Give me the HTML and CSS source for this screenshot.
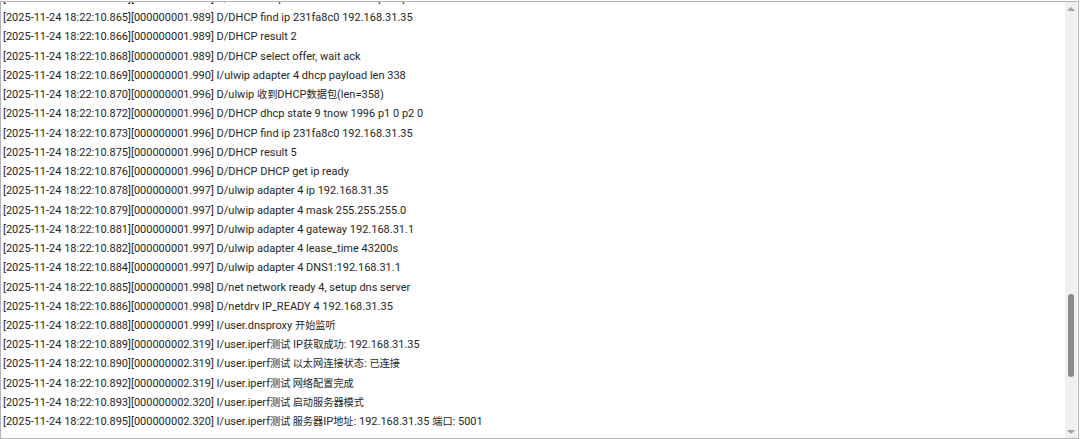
FILE: index.html
```html
<!DOCTYPE html>
<html lang="zh-CN">
<head>
<meta charset="utf-8">
<title>Log</title>
<link rel="stylesheet" href="styles.css">
</head>
<body>
<div class="frame">
  <div class="log">
    <div class="lines">
      <div class="line">[2025-11-24 18:22:10.863][000000001.989] D/DHCP dhcp state 4 tnow 1989 p1 0 p2 0</div>
      <div class="line">[2025-11-24 18:22:10.865][000000001.989] D/DHCP find ip 231fa8c0 192.168.31.35</div>
      <div class="line">[2025-11-24 18:22:10.866][000000001.989] D/DHCP result 2</div>
      <div class="line">[2025-11-24 18:22:10.868][000000001.989] D/DHCP select offer, wait ack</div>
      <div class="line">[2025-11-24 18:22:10.869][000000001.990] I/ulwip adapter 4 dhcp payload len 338</div>
      <div class="line">[2025-11-24 18:22:10.870][000000001.996] D/ulwip <span class="cjk">收到</span>DHCP<span class="cjk">数据包</span>(len=358)</div>
      <div class="line">[2025-11-24 18:22:10.872][000000001.996] D/DHCP dhcp state 9 tnow 1996 p1 0 p2 0</div>
      <div class="line">[2025-11-24 18:22:10.873][000000001.996] D/DHCP find ip 231fa8c0 192.168.31.35</div>
      <div class="line">[2025-11-24 18:22:10.875][000000001.996] D/DHCP result 5</div>
      <div class="line">[2025-11-24 18:22:10.876][000000001.996] D/DHCP DHCP get ip ready</div>
      <div class="line">[2025-11-24 18:22:10.878][000000001.997] D/ulwip adapter 4 ip 192.168.31.35</div>
      <div class="line">[2025-11-24 18:22:10.879][000000001.997] D/ulwip adapter 4 mask 255.255.255.0</div>
      <div class="line">[2025-11-24 18:22:10.881][000000001.997] D/ulwip adapter 4 gateway 192.168.31.1</div>
      <div class="line">[2025-11-24 18:22:10.882][000000001.997] D/ulwip adapter 4 lease_time 43200s</div>
      <div class="line">[2025-11-24 18:22:10.884][000000001.997] D/ulwip adapter 4 DNS1:192.168.31.1</div>
      <div class="line">[2025-11-24 18:22:10.885][000000001.998] D/net network ready 4, setup dns server</div>
      <div class="line">[2025-11-24 18:22:10.886][000000001.998] D/netdrv IP_READY 4 192.168.31.35</div>
      <div class="line">[2025-11-24 18:22:10.888][000000001.999] I/user.dnsproxy <span class="cjk">开始监听</span></div>
      <div class="line">[2025-11-24 18:22:10.889][000000002.319] I/user.iperf<span class="cjk">测试</span> IP<span class="cjk">获取成功</span>: 192.168.31.35</div>
      <div class="line">[2025-11-24 18:22:10.890][000000002.319] I/user.iperf<span class="cjk">测试 以太网连接状态</span>: <span class="cjk">已连接</span></div>
      <div class="line">[2025-11-24 18:22:10.892][000000002.319] I/user.iperf<span class="cjk">测试 网络配置完成</span></div>
      <div class="line">[2025-11-24 18:22:10.893][000000002.320] I/user.iperf<span class="cjk">测试 启动服务器模式</span></div>
      <div class="line">[2025-11-24 18:22:10.895][000000002.320] I/user.iperf<span class="cjk">测试 服务器</span>IP<span class="cjk">地址</span>: 192.168.31.35 <span class="cjk">端口</span>: 5001</div>
    </div>
  </div>
  <div class="scrollbar">
    <div class="arrow up"></div>
    <div class="track">
      <div class="thumb"></div>
    </div>
    <div class="arrow down"></div>
  </div>
</div>
</body>
</html>
```

FILE: styles.css
```css
html, body {
  margin: 0;
  padding: 0;
  background: #ffffff;
}
body {
  padding-top: 1px;
  width: 1080px;
  height: 439px;
  box-sizing: border-box;
}
.frame {
  width: 1079px;
  height: 438px;
  box-sizing: border-box;
  border: 1px solid #b4b4b4;
  display: flex;
  background: #fff;
}
.log {
  flex: 1;
  overflow: hidden;
  padding-left: 2px;
}
.lines {
  margin-top: -13px;
}
.line {
  font-family: Roboto, "Noto Sans CJK SC", sans-serif;
  font-size: 11px;
  line-height: 19.24px;
  height: 19.24px;
  color: #262626;
  white-space: nowrap;
}
.cjk {
  font-family: "Noto Sans CJK SC", sans-serif;
  font-size: 10.2px;
  line-height: 1;
}
.scrollbar {
  width: 12px;
  margin-right: 1px;
  background: #f0f0f0;
  display: flex;
  flex-direction: column;
  align-items: center;
}
.arrow {
  width: 0;
  height: 0;
  border-left: 4px solid transparent;
  border-right: 4px solid transparent;
}
.arrow.up {
  margin-top: 5px;
  border-bottom: 4px solid #a3a3a3;
}
.arrow.down {
  margin-bottom: 4px;
  border-top: 4px solid #a3a3a3;
}
.track {
  flex: 1;
  width: 100%;
  display: flex;
  flex-direction: column;
  align-items: center;
  padding-top: 283px;
}
.thumb {
  width: 6px;
  height: 83px;
  border-radius: 3px;
  background: #8a8a8a;
}
```
